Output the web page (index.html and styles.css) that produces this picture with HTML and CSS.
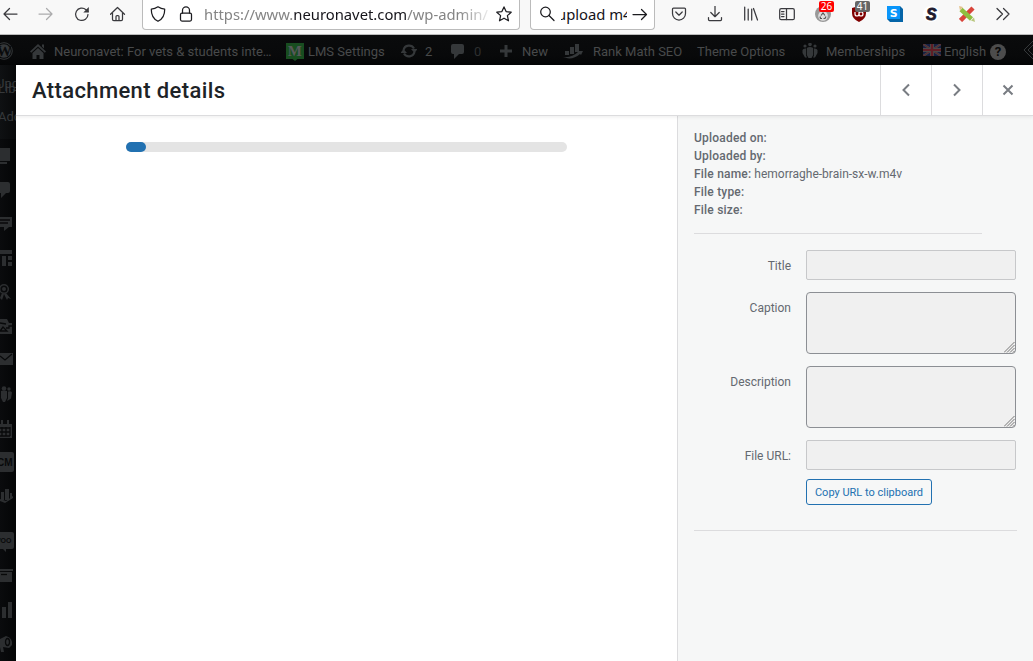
FILE: index.html
```html
<!DOCTYPE html>
<html lang="en">

<head>
  <meta charset="UTF-8">
  <meta name="viewport" content="width=device-width, initial-scale=1.0">
  <title>Attachment details</title>
  <link rel="stylesheet" href="styles.css">
</head>

<body>
  <div class="toolbar">
    <div class="nav-icons">
      <svg class="icon" viewBox="0 0 16 16"><path d="M15 8H2M7.500 2.500L2 8l5.500 5.500"/></svg>
      <svg class="icon faded" viewBox="0 0 16 16"><path d="M1 8h13M8.500 2.500L14 8l-5.500 5.500"/></svg>
      <svg class="icon" viewBox="0 0 16 16"><path d="M14 8.500A6.200 6.200 0 1 1 12 3.700L14 5.500"/><path class="solid" d="M14.800 1v5.500H9.300z"/></svg>
      <svg class="icon" viewBox="0 0 16 16"><path d="M.5 8.300L7.500 1.500l7 6.800M2.500 7v6.200q0 1.300 1.300 1.300h7.400q1.300 0 1.300-1.300V7M6 14.500v-4q0-1 1-1h1q1 0 1 1v4"/></svg>
    </div>
    <div class="url-bar">
      <svg class="icon" viewBox="0 0 16 16"><path d="M8 .8Q11 3 14.700 3.200C14.800 9 12.700 13 8 15.300C3.300 13 1.200 9 1.300 3.200Q5 3 8 .8z"/></svg>
      <svg class="icon lock" viewBox="0 0 16 16"><rect x="2.500" y="7" width="11" height="8" rx="1.500"/><path d="M4.500 7V4.300a3.500 3.500 0 0 1 7 0V7"/></svg>
      <div class="url"><span class="scheme">https://www.</span><span class="domain">neuronavet.com</span><span class="path">/wp-admin/</span></div>
      <svg class="icon" viewBox="0 0 16 16"><path d="M8 .9l2.100 4.700 5.100.6-3.800 3.400 1.100 5.200L8 12.200l-4.500 2.600 1.100-5.200L.8 6.200l5.100-.6z"/></svg>
    </div>
    <div class="search-bar">
      <svg class="icon" viewBox="0 0 16 16"><circle cx="6.500" cy="6" r="4.800"/><path d="M10 9.500l5 5"/></svg>
      <div class="query"><span>upload m4v</span></div>
      <svg class="icon" viewBox="0 0 16 16"><path d="M1 8.500h13.500M9.500 3.500l5 5-5 5"/></svg>
    </div>
    <div class="extensions">
      <svg class="icon" viewBox="0 0 16 16"><path d="M2.500 2h11q1 0 1 1v4.500a6.500 6.500 0 0 1-13 0V3q0-1 1-1zM4.800 6L8 9.200 11.200 6"/></svg>
      <svg class="icon" viewBox="0 0 16 16"><path d="M8 0v10.500M3.800 6.500L8 10.700l4.200-4.200M1.500 11.500v2q0 1 1 1h11q1 0 1-1v-2"/></svg>
      <svg class="icon" viewBox="0 0 16 16"><path d="M1.700 1v13M5.200 3v11M8.700 3v11M10.500 2.500L14.500 14"/></svg>
      <svg class="icon" viewBox="0 0 16 16"><rect x=".7" y="2.700" width="14.600" height="11" rx="1.500"/><path d="M7.500 3v10.500M2.500 5.500H5M2.500 8H5M2.500 10.500H5"/></svg>
      <div class="ext">
        <svg viewBox="0 0 16 16"><circle cx="8" cy="8" r="8" fill="#999"/><circle cx="8" cy="10" r="4.800" fill="#ddd"/><path d="M6 9.500L8 7l2 2.500M11 10.500l-1 2H8.500M7 12.500H5.500l-.5-2" fill="none" stroke="#555" stroke-width="1.200"/></svg>
        <span class="badge red">26</span>
      </div>
      <div class="ext">
        <svg viewBox="0 0 16 16"><path d="M8 0l7 2v5q0 6-7 9-7-3-7-9V2z" fill="#800000"/><path d="M4 6v2q0 2 2 2t2-2V6M8 8q0 2 2 2t2-2-2-2-2 2" fill="none" stroke="#fff" stroke-width="1.200"/></svg>
        <span class="badge gray">41</span>
      </div>
      <svg class="ext" viewBox="0 0 16 16"><path d="M0 0h13l3 3v13H3l-3-3z" fill="#0565a8"/><path d="M0 0h13v13H0z" fill="#0a96fa"/><text class="logo-s" x="2.800" y="10.800">S</text></svg>
      <svg class="ext" viewBox="0 0 16 16"><circle cx="8" cy="8" r="8" fill="#fff"/><text class="logo-dark" x="3" y="13.800">S</text></svg>
      <svg class="ext" viewBox="0 0 16 16"><path d="M1.500 14.500L14 2" stroke="#d9443a" stroke-width="4.500"/><path d="M2 3.500L12.500 13" stroke="#8fbe3f" stroke-width="4.500"/><path d="M0 0l4 1-3 3.500z" fill="#e3c28c"/><path d="M12 14.500l3-3 1 4.500z" fill="#b9c77e"/></svg>
      <svg class="icon" viewBox="0 0 16 16"><path d="M2 2.500L7.500 8 2 13.500M8.500 2.500L14 8l-5.500 5.500"/></svg>
    </div>
  </div>

  <div class="admin-bar">
    <div class="item wp"><svg viewBox="0 0 18 18"><circle cx="9" cy="9" r="8.300" class="line"/><circle cx="9" cy="9" r="6.800"/><text class="wp-w" x="1.800" y="14.400">W</text></svg></div>
    <div class="item site"><svg viewBox="0 0 16 16"><path d="M8 1l8 7.500-1.200 1.200L8 3.500 1.200 9.700 0 8.500zM12 1.500h2v4l-2-2zM8 5l5.500 5v6h-4v-4h-3v4h-4v-6z"/></svg><span>Neuronavet: For vets &amp; students inte…</span></div>
    <div class="item lms"><svg viewBox="0 0 18 18"><path d="M0 0h18v16h-6.500L9 18l-2.500-2H0z" fill="#184d20"/><text class="lms-m" x="1.800" y="13.200">M</text></svg><span>LMS Settings</span></div>
    <div class="item updates"><svg viewBox="0 0 16 16"><path class="thick" d="M2.500 7A5.700 5.700 0 0 1 13 5.500M13.500 9A5.700 5.700 0 0 1 3 10.500"/><path d="M10 6h6.500l-3 4zM6 10H-.5l3-4z"/></svg><span>2</span></div>
    <div class="item comments"><svg viewBox="0 0 16 16"><path d="M3 1h9q2 0 2 2v6q0 2-2 2H9l-5 5v-5H3q-2 0-2-2V3q0-2 2-2z"/></svg><span class="dim">0</span></div>
    <div class="item new"><svg viewBox="0 0 16 16"><path d="M5.500 2h3v4.500H13v3H8.500V14h-3V9.500H1v-3h4.500z"/></svg><span>New</span></div>
    <div class="item rank"><svg viewBox="0 0 20 16"><path d="M2 8h4v4H2zM7 4h4v7H7zM12 1h4v8h-4zM0 14q9 1 15-5l-1-1h6l-2 4-1-1Q9 18 0 14z"/></svg><span>Rank Math SEO</span></div>
    <div class="item theme"><span>Theme Options</span></div>
    <div class="item members"><svg viewBox="0 0 16 16"><circle cx="8" cy="1.500" r="1.800"/><circle cx="3" cy="3" r="1.600"/><circle cx="13" cy="3" r="1.600"/><path d="M4.800 5q3-2 6.400 0v7l-1.700 3h-3l-1.700-3zM4 5.500v7l1 2H3L.5 10V7Q1.500 5 4 5.500zM12 5.500v7l-1 2h2l2.500-4.500V7Q14.500 5 12 5.500z"/></svg><span>Memberships</span></div>
    <div class="item lang"><svg viewBox="0 0 18 12"><path d="M0 0h18v12H0z" fill="#171f42"/><path d="M0 0l18 12M18 0L0 12" stroke="#484848" stroke-width="2.200"/><path d="M0 0l18 12M18 0L0 12" stroke="#601d25" stroke-width=".8"/><path d="M9 0v12M0 6h18" stroke="#484848" stroke-width="4"/><path d="M9 0v12M0 6h18" stroke="#601d25" stroke-width="2.200"/></svg><span>English</span></div>
    <div class="item help"><b>?</b></div>
    <div class="item edge"><svg viewBox="0 0 20 20"><path class="line" d="M10 1l9 9-9 9-9-9zM10 5l5 5-5 5-5-5z"/></svg></div>
  </div>

  <div class="main">
    <div class="side-menu">
      <div class="submenu">
        <span class="ghost upper">Upg</span>
        <span class="ghost lower">Lib</span>
        <span class="ghost add">Add</span>
      </div>
      <div class="menu-icons">
        <svg viewBox="0 0 16 16"><path d="M0 0h10v13H0zM0 14h7v2H0z"/></svg>
        <svg viewBox="0 0 16 16"><path d="M0 0h8q2 0 2 2v7q0 2-2 2H6l-5 5v-5H0z"/></svg>
        <svg viewBox="0 0 16 16"><path d="M0 1h12v10H9l-5 4v-4H0z"/><path class="cut" d="M0 4h10M0 7h8"/></svg>
        <svg viewBox="0 0 16 16"><path d="M0 0h12v4H0zM2 6h4v4H2zM8 6h4v4H8zM2 10h4v6H2zM8 12h4v4H8z"/></svg>
        <svg viewBox="0 0 16 16"><circle cx="4" cy="5" r="4.300" class="thick"/><circle cx="4" cy="5" r="2"/><path d="M2 9l2 1-2 6-2-2zM6 9l-2 1 3 6 1-2 3 1z"/></svg>
        <svg viewBox="0 0 16 16"><path d="M0 1h7l2 4h3v11H0z"/><path class="cut" d="M0 5l6 1M0 13l3-4 4 4zM6 10h3V8h3"/></svg>
        <svg viewBox="0 0 16 16"><path d="M0 1h13v12H0z"/><path class="cut" d="M0 4l5 4 7-6"/></svg>
        <svg viewBox="0 0 16 16"><circle cx="4" cy="2.500" r="2.300"/><circle cx="9" cy="3" r="1.700"/><path d="M1 5q3-1 6 0v7l-2 4H3l-2-4zM8 5.500q3-1 4 1l-1 6-3 2H7l1-2z"/></svg>
        <svg viewBox="0 0 16 16"><path d="M0 4h1V0h2v4h4V0h2v4h3v14H0z"/><path class="cut" d="M0 8h10M0 12h10M0 16h10M2 7v9M6 7v9M10 7v9"/></svg>
        <svg class="tall" viewBox="0 0 16 20"><path d="M0 0h12q2 0 2 2v16q0 2-2 2H0z"/><text class="menu-text" x="-3" y="14">CM</text></svg>
        <svg viewBox="0 0 16 16"><path d="M1 4h3v8H1zM5 1h4v11H5zM10 5h2v6h-2zM0 11l6 2 7-5v2l-8 5-5-2z"/></svg>
        <svg class="tall woo" viewBox="0 0 16 20"><path d="M0 0h12q2 0 2 2v13q0 2-2 2H6v3l-3-3H0z"/><text class="menu-text small" x="-6" y="11">WOO</text></svg>
        <svg viewBox="0 0 16 16"><path d="M0 1h13v2H0zM0 4h12v10H0z"/><path class="cut" d="M1 6.500h6"/></svg>
        <svg viewBox="0 0 16 16"><path d="M2 5h4v11H2zM8 0h4v16H8z"/></svg>
        <svg viewBox="0 0 16 16"><path d="M0 3l6-3q7 2 6 9l-3 3-6-1 1 5H1L0 11z"/><ellipse class="cut" cx="7.500" cy="6" rx="2" ry="3.500"/></svg>
      </div>
    </div>

    <div class="modal">
      <div class="modal-header">
        <h1>Attachment details</h1>
        <button class="head-btn"><svg viewBox="0 0 20 20"><path d="M13 4.500L7.500 10l5.500 5.500"/></svg></button>
        <button class="head-btn"><svg viewBox="0 0 20 20"><path d="M7 4.500l5.500 5.500L7 15.500"/></svg></button>
        <button class="head-btn"><svg viewBox="0 0 20 20"><path d="M5.500 5.500l9 9M14.500 5.500l-9 9"/></svg></button>
      </div>
      <div class="modal-content">
        <div class="preview">
          <div class="progress"><div class="progress-bar"></div></div>
        </div>
        <div class="info">
          <div class="details">
            <div><strong>Uploaded on:</strong></div>
            <div><strong>Uploaded by:</strong></div>
            <div><strong>File name:</strong> hemorraghe-brain-sx-w.m4v</div>
            <div><strong>File type:</strong></div>
            <div><strong>File size:</strong></div>
          </div>
          <div class="settings">
            <div class="field"><label for="title">Title</label><input type="text" id="title" readonly></div>
            <div class="field"><label for="caption">Caption</label><div class="area"><textarea id="caption" readonly></textarea><svg class="grip" viewBox="0 0 11 11"><path d="M0 10.500L10.500 0M3 10.500L10.500 3M6 10.500L10.500 6M9 10.500L10.500 9"/></svg></div></div>
            <div class="field"><label for="description">Description</label><div class="area"><textarea id="description" readonly></textarea><svg class="grip" viewBox="0 0 11 11"><path d="M0 10.500L10.500 0M3 10.500L10.500 3M6 10.500L10.500 6M9 10.500L10.500 9"/></svg></div></div>
            <div class="field"><label for="url">File URL:</label><input type="text" id="url" readonly></div>
            <button class="copy-btn">Copy URL to clipboard</button>
          </div>
        </div>
      </div>
    </div>
  </div>
</body>

</html>
```

FILE: styles.css
```css
* {
  box-sizing: border-box;
}

body {
  margin: 0;
  height: 661px;
  display: flex;
  flex-direction: column;
  overflow: hidden;
  background-color: #fff;
  font-family: Roboto, "Liberation Sans", sans-serif;
}

svg {
  display: block;
  flex: none;
}

/* browser toolbar */
.toolbar {
  height: 35px;
  flex: none;
  display: flex;
  background-color: #f8f8f8;
  border-bottom: 1px solid #bbb;
  padding-left: 2px;
}

.icon {
  width: 16px;
  height: 16px;
  fill: none;
  stroke: #3a3a3e;
  stroke-width: 1.25;
  stroke-linecap: round;
  stroke-linejoin: round;
}

.icon .solid {
  fill: #3a3a3e;
  stroke: none;
}

.icon.faded {
  opacity: 0.4;
}

.nav-icons {
  display: flex;
  gap: 20px;
  padding-top: 6px;
  width: 140px;
}

.url-bar,
.search-bar {
  height: 30px;
  display: flex;
  background-color: #fff;
  border: 1px solid #bbb;
  border-top: none;
  border-radius: 0 0 4px 4px;
  padding-top: 6px;
}

.url-bar {
  width: 378px;
  padding-left: 7px;
}

.url-bar .icon,
.search-bar .icon {
  stroke: #1c1c20;
}

.lock {
  margin-left: 12px;
}

.url,
.query {
  font-family: "Noto Sans", "Open Sans", sans-serif;
  font-size: 14.8px;
  line-height: 18px;
  margin-top: -1px;
  white-space: nowrap;
  overflow: hidden;
}

.url {
  width: 292px;
  height: 22px;
  margin-left: 10px;
  color: #858585;
  -webkit-mask-image: linear-gradient(to right, #000 255px, transparent 290px);
  mask-image: linear-gradient(to right, #000 255px, transparent 290px);
}

.domain {
  color: #15141a;
}

.search-bar {
  width: 125px;
  margin-left: 10px;
  padding-left: 8px;
}

.query {
  width: 66px;
  height: 22px;
  margin-left: 6px;
  margin-right: 5px;
  color: #15141a;
}

.query span {
  margin-left: -4px;
}

.extensions {
  display: flex;
  gap: 20px;
  padding: 6px 0 0 16px;
}

.ext {
  position: relative;
  width: 16px;
  height: 16px;
}

.badge {
  position: absolute;
  top: -5px;
  left: 4px;
  width: 15px;
  height: 11px;
  border-radius: 2px;
  color: #fff;
  font-family: "Noto Sans", sans-serif;
  font-size: 10px;
  line-height: 11px;
  text-align: center;
}

.badge.red {
  background-color: #f00;
}

.badge.gray {
  background-color: #666;
}

.logo-s {
  fill: #fff;
  font: bold 11px "DejaVu Sans", sans-serif;
}

.logo-dark {
  fill: #1f1b2e;
  stroke: #1f1b2e;
  stroke-width: 0.8;
  font: italic bold 16px "Liberation Sans", sans-serif;
}

/* wordpress admin bar */
.admin-bar {
  height: 30px;
  flex: none;
  display: flex;
  overflow: hidden;
  background: linear-gradient(#0a0b0c, #08090a 70%, #040506);
  color: #484a4b;
  font-size: 13px;
  line-height: 33px;
}

.item {
  flex: none;
  display: flex;
  gap: 8px;
  white-space: nowrap;
}

.item svg {
  width: 16px;
  height: 16px;
  margin-top: 8px;
  fill: #35383a;
}

.item .line {
  fill: none;
  stroke: #35383a;
}

.item .thick {
  fill: none;
  stroke: #35383a;
  stroke-width: 2.2;
}

.item .dim {
  color: #2d2f30;
}

.wp {
  width: 35px;
  margin-left: -5px;
}

.wp svg {
  width: 18px;
  height: 18px;
  margin-top: 7px;
}

.wp-w {
  fill: #0a0b0c;
  font: bold 15px "Liberation Serif", serif;
}

.site {
  width: 256px;
}

.lms {
  width: 115px;
  gap: 4px;
}

.lms svg {
  width: 18px;
  height: 18px;
}

.lms-m {
  fill: #57595a;
  font: bold 15px "Liberation Serif", serif;
}

.updates,
.comments {
  width: 49px;
}

.new {
  width: 64px;
  gap: 7px;
}

.rank {
  width: 134px;
  gap: 10px;
}

.rank svg {
  width: 20px;
}

.theme {
  width: 105px;
}

.members {
  width: 121px;
}

.lang {
  width: 67px;
  gap: 3px;
}

.lang svg {
  width: 18px;
  height: 12px;
  margin-top: 9px;
}

.help {
  width: 33px;
}

.help b {
  width: 16px;
  height: 16px;
  margin-top: 9px;
  border-radius: 50%;
  background-color: #4c4c4c;
  color: #08090a;
  line-height: 16px;
  text-align: center;
}

.edge svg {
  width: 20px;
  height: 20px;
  margin-top: 5px;
}

.main {
  flex: 1;
  display: flex;
  min-height: 0;
}

/* left menu behind the modal */
.side-menu {
  width: 16px;
  flex: none;
  overflow: hidden;
  background: linear-gradient(to right, #0a0b0d, #040506);
}

.submenu {
  position: relative;
  height: 74px;
  background: linear-gradient(to right, #0f1113, #08090a);
  color: #36393b;
  font-size: 13px;
  line-height: 16px;
}

.ghost {
  position: absolute;
}

.upper {
  left: -4px;
  top: 11px;
}

.lower {
  left: -2px;
  top: 16px;
}

.add {
  left: -2px;
  top: 44px;
}

.menu-icons {
  display: flex;
  flex-direction: column;
  gap: 18px;
  padding-top: 9px;
  fill: #2c2e30;
}

.menu-icons svg {
  width: 16px;
  height: 16px;
  overflow: visible;
}

.menu-icons .cut {
  fill: none;
  stroke: #08090a;
  stroke-width: 1.3;
}

.menu-icons .thick {
  fill: none;
  stroke: #2c2e30;
  stroke-width: 1.5;
}

.menu-icons .tall {
  height: 20px;
  margin-top: -2px;
  margin-bottom: -2px;
}

.menu-icons .woo {
  margin-top: 10px;
}

.menu-text {
  fill: #08090a;
  font: bold 10px "Liberation Sans", sans-serif;
}

.menu-text.small {
  font-size: 7px;
}

/* attachment modal */
.modal {
  flex: 1;
  display: flex;
  flex-direction: column;
  background-color: #fff;
}

.modal-header {
  position: relative;
  height: 51px;
  flex: none;
  display: flex;
  border-bottom: 1px solid #dcdcde;
  box-shadow: 0 1px 4px rgba(0, 0, 0, 0.08);
}

.modal-header h1 {
  flex: 1;
  margin: 0;
  padding-left: 16px;
  color: #1d2327;
  font-size: 22px;
  font-weight: 500;
  letter-spacing: 0.38px;
  line-height: 51px;
}

.head-btn {
  width: 51px;
  display: flex;
  align-items: center;
  justify-content: center;
  padding: 0;
  border: none;
  border-left: 1px solid #dcdcde;
  background-color: transparent;
}

.head-btn svg {
  width: 20px;
  height: 20px;
  fill: none;
  stroke: #787c82;
  stroke-width: 2;
}

.modal-content {
  flex: 1;
  display: flex;
}

.preview {
  flex: 1;
  padding: 26px 110px 0;
}

.progress {
  height: 10px;
  border-radius: 5px;
  background-color: #e4e4e4;
}

.progress-bar {
  width: 20px;
  height: 10px;
  border-radius: 5px;
  background-color: #2271b1;
}

.info {
  width: 356px;
  padding: 13px 16px 0;
  border-left: 1px solid #dcdcde;
  background-color: #f6f7f7;
  color: #646970;
  font-size: 12px;
}

.details {
  width: 288px;
  height: 105px;
  line-height: 18px;
  border-bottom: 1px solid #dcdcde;
}

.details strong {
  font-weight: 500;
  letter-spacing: 0.2px;
}

.settings {
  display: flex;
  flex-direction: column;
  gap: 12px;
  height: 297px;
  padding-top: 16px;
  border-bottom: 1px solid #dcdcde;
}

.field {
  display: flex;
  gap: 15px;
}

.field label {
  width: 97px;
  padding-top: 8px;
  line-height: 16px;
  text-align: right;
}

.field input {
  width: 210px;
  height: 30px;
  border: 1px solid #c7c8ca;
  border-radius: 2px;
  background-color: #f0f0f0;
}

.area {
  position: relative;
  height: 62px;
}

.field textarea {
  display: block;
  width: 210px;
  height: 62px;
  border: 1px solid #8c8f94;
  border-radius: 4px;
  background-color: #f0f0f0;
  resize: none;
}

.grip {
  position: absolute;
  right: 1px;
  bottom: 1px;
  width: 11px;
  height: 11px;
  stroke: #777;
}

.copy-btn {
  width: 126px;
  height: 26px;
  margin: -3px 0 0 112px;
  padding: 0;
  border: 1px solid #2271b1;
  border-radius: 3px;
  background-color: #f6f7f7;
  color: #2271b1;
  font-family: inherit;
  font-size: 11px;
}
```
